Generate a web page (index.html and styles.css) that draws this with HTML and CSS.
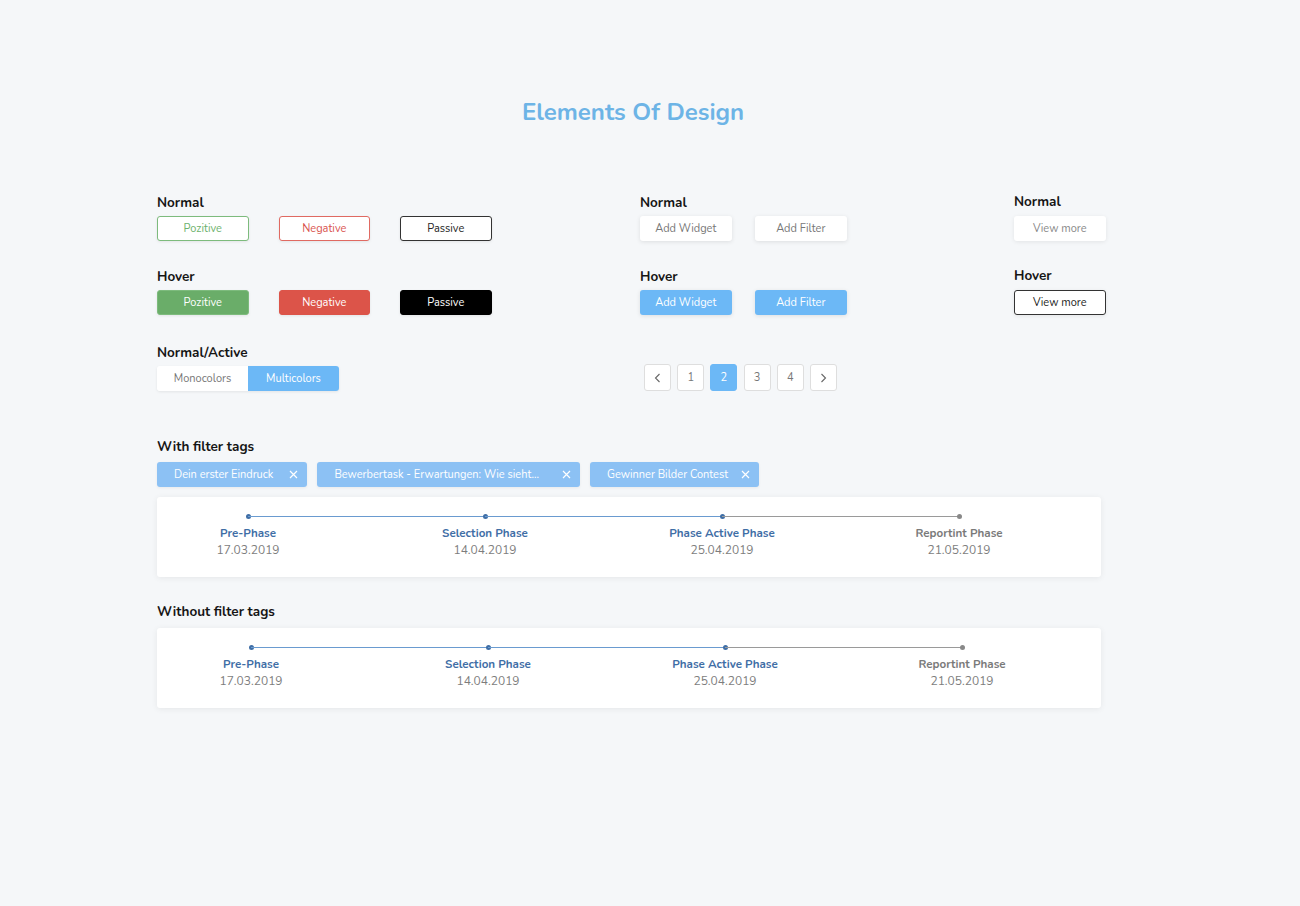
FILE: index.html
```html
<!DOCTYPE html>
<html lang="en">
<head>
    <meta charset="UTF-8">
    <meta name="viewport" content="width=device-width, initial-scale=1.0">
    <title>Elements Of Design</title>
    <link rel="stylesheet" href="styles.css">
</head>
<body>
    <h1 class="title">Elements Of Design</h1>

    <div class="page">
        <div class="controls">
            <div class="col col-one">
                <div class="group">
                    <h4>Normal</h4>
                    <div class="btn-row">
                        <button class="btn btn-pos">Pozitive</button>
                        <button class="btn btn-neg">Negative</button>
                        <button class="btn btn-pas">Passive</button>
                    </div>
                </div>
                <div class="group">
                    <h4>Hover</h4>
                    <div class="btn-row">
                        <button class="btn btn-pos hover">Pozitive</button>
                        <button class="btn btn-neg hover">Negative</button>
                        <button class="btn btn-pas hover">Passive</button>
                    </div>
                </div>
                <div class="group group-last">
                    <h4>Normal/Active</h4>
                    <div class="segmented">
                        <button class="seg">Monocolors</button>
                        <button class="seg active">Multicolors</button>
                    </div>
                </div>
            </div>

            <div class="col col-two">
                <div class="group">
                    <h4>Normal</h4>
                    <div class="btn-row narrow">
                        <button class="btn btn-soft">Add Widget</button>
                        <button class="btn btn-soft">Add Filter</button>
                    </div>
                </div>
                <div class="group">
                    <h4>Hover</h4>
                    <div class="btn-row narrow">
                        <button class="btn btn-soft hover">Add Widget</button>
                        <button class="btn btn-soft hover">Add Filter</button>
                    </div>
                </div>
                <div class="pagination">
                    <button class="page-btn">
                        <svg width="8" height="10" viewBox="0 0 8 10"><polyline points="5.5,1 1.5,5 5.5,9" fill="none" stroke="#666" stroke-width="1.1"/></svg>
                    </button>
                    <button class="page-btn">1</button>
                    <button class="page-btn active">2</button>
                    <button class="page-btn">3</button>
                    <button class="page-btn">4</button>
                    <button class="page-btn">
                        <svg width="8" height="10" viewBox="0 0 8 10"><polyline points="2.5,1 6.5,5 2.5,9" fill="none" stroke="#666" stroke-width="1.1"/></svg>
                    </button>
                </div>
            </div>

            <div class="col col-three">
                <div class="group">
                    <h4>Normal</h4>
                    <button class="btn btn-more">View more</button>
                </div>
                <div class="group">
                    <h4>Hover</h4>
                    <button class="btn btn-more hover">View more</button>
                </div>
            </div>
        </div>

        <h4 class="section-label">With filter tags</h4>
        <div class="tags">
            <span class="tag">Dein erster Eindruck
                <svg width="9" height="9" viewBox="0 0 9 9"><path d="M1 1 L8 8 M8 1 L1 8" stroke="#fff" stroke-width="1.2"/></svg>
            </span>
            <span class="tag tag-long">Bewerbertask - Erwartungen: Wie sieht...
                <svg width="9" height="9" viewBox="0 0 9 9"><path d="M1 1 L8 8 M8 1 L1 8" stroke="#fff" stroke-width="1.2"/></svg>
            </span>
            <span class="tag tag-short">Gewinner Bilder Contest
                <svg width="9" height="9" viewBox="0 0 9 9"><path d="M1 1 L8 8 M8 1 L1 8" stroke="#fff" stroke-width="1.2"/></svg>
            </span>
        </div>
        <div class="timeline">
            <div class="step done"><span class="dot"></span><strong>Pre-Phase</strong><span class="date">17.03.2019</span></div>
            <div class="step done"><span class="dot"></span><strong>Selection Phase</strong><span class="date">14.04.2019</span></div>
            <div class="step current"><span class="dot"></span><strong>Phase Active Phase</strong><span class="date">25.04.2019</span></div>
            <div class="step"><span class="dot"></span><strong>Reportint Phase</strong><span class="date">21.05.2019</span></div>
        </div>

        <h4 class="section-label second">Without filter tags</h4>
        <div class="timeline shifted">
            <div class="step done"><span class="dot"></span><strong>Pre-Phase</strong><span class="date">17.03.2019</span></div>
            <div class="step done"><span class="dot"></span><strong>Selection Phase</strong><span class="date">14.04.2019</span></div>
            <div class="step current"><span class="dot"></span><strong>Phase Active Phase</strong><span class="date">25.04.2019</span></div>
            <div class="step"><span class="dot"></span><strong>Reportint Phase</strong><span class="date">21.05.2019</span></div>
        </div>
    </div>
</body>
</html>
```

FILE: styles.css
```css
body {
    margin: 0;
    background: #f5f7f9;
    font-family: Nunito, Lato, 'Open Sans', sans-serif;
    color: #1a1a1a;
}
.title {
    margin: 0;
    padding: 97px 34px 0 0;
    line-height: 30px;
    text-align: center;
    font-size: 24px;
    font-weight: 700;
    color: #6db4e6;
}
.page {
    width: 944px;
    margin: 66px 0 0 157px;
    padding-bottom: 60px;
}
.controls {
    display: grid;
    grid-template-columns: 483px 374px 92px;
}
.col {
    display: flex;
    flex-direction: column;
}
.group {
    margin-bottom: 26px;
}
.group-last {
    margin: 2px 0 0;
}
h4 {
    margin: 0 0 5px;
    font-size: 13.5px;
    line-height: 18px;
    font-weight: 700;
    color: #151515;
}
.col-one h4,
.col-two h4 {
    position: relative;
    top: 1px;
}
.btn-row {
    display: flex;
    gap: 30px;
}
.btn-row.narrow {
    gap: 23.5px;
}
.btn {
    width: 91.5px;
    height: 25px;
    padding: 0;
    border: 1px solid transparent;
    border-radius: 3px;
    background: white;
    font-family: inherit;
    font-size: 11px;
    cursor: pointer;
    box-shadow: 0 1px 3px rgba(0,0,0,0.08);
}
.btn-pos { border-color: #7dbb7d; color: #6cb16c; }
.btn-neg { border-color: #e06a62; color: #d9534f; }
.btn-pas { border-color: #333; color: #222; }
.btn-pos.hover { background: #6aad69; color: white; }
.btn-neg.hover { background: #dc5449; border-color: #dc5449; color: white; }
.btn-pas.hover { background: #000; border-color: #000; color: white; }
.btn-soft {
    color: #777;
    box-shadow: 0 1px 4px rgba(0,0,0,0.1);
}
.btn-soft.hover {
    background: #6cb8f6;
    color: white;
}
.btn-more {
    color: #888;
    box-shadow: 0 1px 4px rgba(0,0,0,0.08);
}
.btn-more.hover {
    border-color: #333;
    color: #222;
}
.segmented {
    display: flex;
    width: 182px;
    border-radius: 3px;
    box-shadow: 0 1px 3px rgba(0,0,0,0.08);
    overflow: hidden;
}
.seg {
    flex: 1;
    height: 25px;
    border: none;
    background: white;
    color: #777;
    font-family: inherit;
    font-size: 11px;
}
.seg.active {
    background: #6cb8f6;
    color: white;
}
.pagination {
    display: flex;
    gap: 6.2px;
    margin: 23px 0 0 4px;
}
.page-btn {
    display: flex;
    align-items: center;
    justify-content: center;
    width: 27px;
    height: 27px;
    padding: 0;
    border: 1px solid #dedede;
    border-radius: 3px;
    background: white;
    color: #777;
    font-family: inherit;
    font-size: 11px;
}
.page-btn.active {
    background: #6cb8f6;
    border-color: #6cb8f6;
    color: white;
}
.section-label {
    margin: 47px 0 6px;
}
.section-label.second {
    margin: 26px 0 7px;
}
.tags {
    display: flex;
    gap: 10px;
    margin-bottom: 10px;
}
.tag {
    display: flex;
    align-items: center;
    height: 25px;
    padding: 0 9px 0 17px;
    border-radius: 3px;
    background: #8cc1f4;
    color: white;
    font-size: 11px;
    box-shadow: 0 1px 3px rgba(0,0,0,0.06);
}
.tag svg {
    margin-left: 16px;
}
.tag-long svg {
    margin-left: 23px;
}
.tag-short svg {
    margin-left: 13px;
}
.timeline {
    display: flex;
    gap: 117px;
    padding: 17px 0 18px 31px;
    background: white;
    border-radius: 3px;
    box-shadow: 0 1px 6px rgba(0,0,0,0.07);
}
.timeline.shifted {
    padding-left: 34px;
}
.step {
    position: relative;
    display: flex;
    flex-direction: column;
    align-items: center;
    width: 120px;
    font-size: 12px;
}
.step .dot {
    width: 5px;
    height: 5px;
    border-radius: 50%;
    background: #888;
    margin-bottom: 6px;
}
.step.done .dot,
.step.current .dot {
    background: #3f6ea6;
}
.step.done::after,
.step.current::after {
    content: "";
    position: absolute;
    top: 2px;
    left: 60px;
    width: 237px;
    height: 1px;
    background: #6a9bd0;
}
.step.current::after {
    background: #9a9a9a;
}
.step strong {
    font-size: 11.6px;
    line-height: 17px;
    font-weight: 700;
    color: #3f6ea6;
}
.step:last-child strong {
    color: #7a7a7a;
}
.step .date {
    line-height: 17px;
    color: #7d7d7d;
}
```
